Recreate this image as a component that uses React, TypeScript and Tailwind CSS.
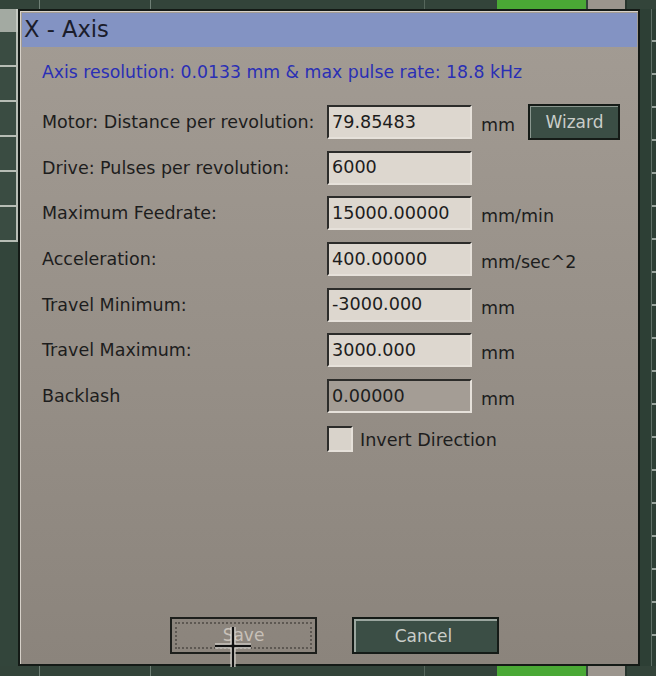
import React from 'react';

const font = { fontFamily: '"DejaVu Sans", Verdana, sans-serif' };

const rows = [
  { label: 'Motor: Distance per revolution:', value: '79.85483', unit: 'mm', wizard: true },
  { label: 'Drive: Pulses per revolution:', value: '6000', unit: '' },
  { label: 'Maximum Feedrate:', value: '15000.00000', unit: 'mm/min' },
  { label: 'Acceleration:', value: '400.00000', unit: 'mm/sec^2' },
  { label: 'Travel Minimum:', value: '-3000.000', unit: 'mm' },
  { label: 'Travel Maximum:', value: '3000.000', unit: 'mm' },
  { label: 'Backlash', value: '0.00000', unit: 'mm', disabled: true },
];

// strip of the main window peeking out above / below the dialog
const EdgeStrip = ({ className }: { className: string }) => (
  <div className={`flex ${className} bg-[#33443a]`}>
    <div className="w-[40px] border-r border-[#6f7f75]" />
    <div className="w-[111px] border-r border-[#6f7f75]" />
    <div className="w-[274px] border-r border-[#56675c]" />
    <div className="w-[72px]" />
    <div className="w-[89px] bg-[#4aa935]" />
    <div className="w-[2px]" />
    <div className="w-[39px] bg-[#9b958d] border-r-2 border-[#26342c]" />
    <div className="flex-1" />
  </div>
);

const App = () => {
  return (
    <div className="w-[656px] h-[676px] bg-[#33443a] flex flex-col overflow-hidden relative" style={font}>
      <EdgeStrip className="h-[9px]" />

      <div className="flex h-[657px]">
        {/* Left: list panel behind */}
        <div className="w-[18px] flex flex-col">
          <div className="h-[23px] bg-[#a3aaa2] border-r-2 border-[#c4c9c2]" />
          {[0, 1, 2, 3, 4, 5].map((i) => (
            <div key={i} className="h-[35px] bg-[#3a4c42] border-b-2 border-r-2 border-[#b7bdb5]" />
          ))}
          <div className="flex-1 bg-[#33453b]" />
        </div>

        {/* Dialog */}
        <div className="w-[622px] border-2 border-[#141a16] flex flex-col">
          <div className="flex-1 flex flex-col border-l border-t border-[#d7d1c9] bg-gradient-to-b from-[#a39c94] to-[#8b847c]">
            <div className="h-[34px] bg-[#8393c3] mx-[1px] mt-[1px] flex items-center pl-[2px] text-[22.6px] text-[#1b1d2b]">
              X - Axis
            </div>

            <div className="pl-[21px] pt-[13px] text-[17.3px] text-[#2a2fb5]">
              Axis resolution: 0.0133 mm &amp; max pulse rate: 18.8 kHz
            </div>

            <div className="mt-[19px] pl-[21px] flex flex-col gap-[11.7px] text-[17.5px] text-[#1d1d1d]">
              {rows.map((r) => (
                <div key={r.label} className="flex h-[34px]">
                  <div className="w-[285px] flex items-center">{r.label}</div>
                  <div
                    className={`w-[145px] border-2 border-t-[#2c2c2a] border-l-[#2c2c2a] border-b-[#e6e1da] border-r-[#e6e1da] flex items-center pl-[3px] text-[17.6px] ${
                      r.disabled ? 'bg-[#a49d95]' : 'bg-[#ddd7cf]'
                    }`}
                  >
                    {r.value}
                  </div>
                  <div className="w-[56px] pl-[9px] pt-[7px]">{r.unit}</div>
                  {r.wizard && (
                    <div className="w-[92px] h-[36px] -mt-[1px] bg-[#3b4e45] border-2 border-[#151b17] flex items-center justify-center text-[17px] text-[#c9cdc9]">
                      <div className="w-full h-full border-t border-l border-[#8a978f] flex items-center justify-center">Wizard</div>
                    </div>
                  )}
                </div>
              ))}

              <div className="flex items-center h-[26px] mt-[1px]">
                <div className="w-[285px]" />
                <div className="w-[26px] h-[26px] bg-[#d9d3cb] border-2 border-t-[#2c2c2a] border-l-[#2c2c2a] border-b-[#e6e1da] border-r-[#e6e1da]" />
                <div className="pl-[7px] pt-[2px] text-[17.6px]">Invert Direction</div>
              </div>
            </div>

            <div className="flex-1" />

            {/* Bottom buttons */}
            <div className="flex pl-[149px] gap-[35px] mb-[10px]">
              <div className="w-[147px] h-[37px] border-2 border-[#1d1f1c] p-[3px]">
                <div className="w-full h-full border-2 border-dotted border-[#5d5852] flex items-center justify-center text-[17px] text-[#c7c0b8]">
                  Save
                </div>
              </div>
              <div className="w-[147px] h-[37px] bg-[#3b4e45] border-2 border-[#151b17] text-[17px] text-[#c9cdc9]">
                <div className="w-full h-full border-t-2 border-l-2 border-[#9ba69f] flex items-center justify-center pr-[6px]">Cancel</div>
              </div>
            </div>
          </div>
        </div>

        {/* Right: scale strip behind */}
        <div className="flex-1 bg-[#2d3f35] flex justify-end">
          <div className="w-[5px] border-l border-[#5f7067] bg-[repeating-linear-gradient(to_bottom,transparent_0px,transparent_31px,#9aa59e_31px,#9aa59e_33px)]" />
        </div>
      </div>

      <EdgeStrip className="flex-1" />

      {/* mouse cursor */}
      <svg className="absolute left-[212px] top-[626px]" width="42" height="42" viewBox="0 0 42 42">
        <g stroke="#e8e4de" strokeWidth="5" fill="none">
          <path d="M21 1V41M3 20H39" />
        </g>
        <g stroke="#111" strokeWidth="2.5" fill="none">
          <path d="M21 1V41M3 20H39" />
        </g>
      </svg>
    </div>
  );
};

export default App;
